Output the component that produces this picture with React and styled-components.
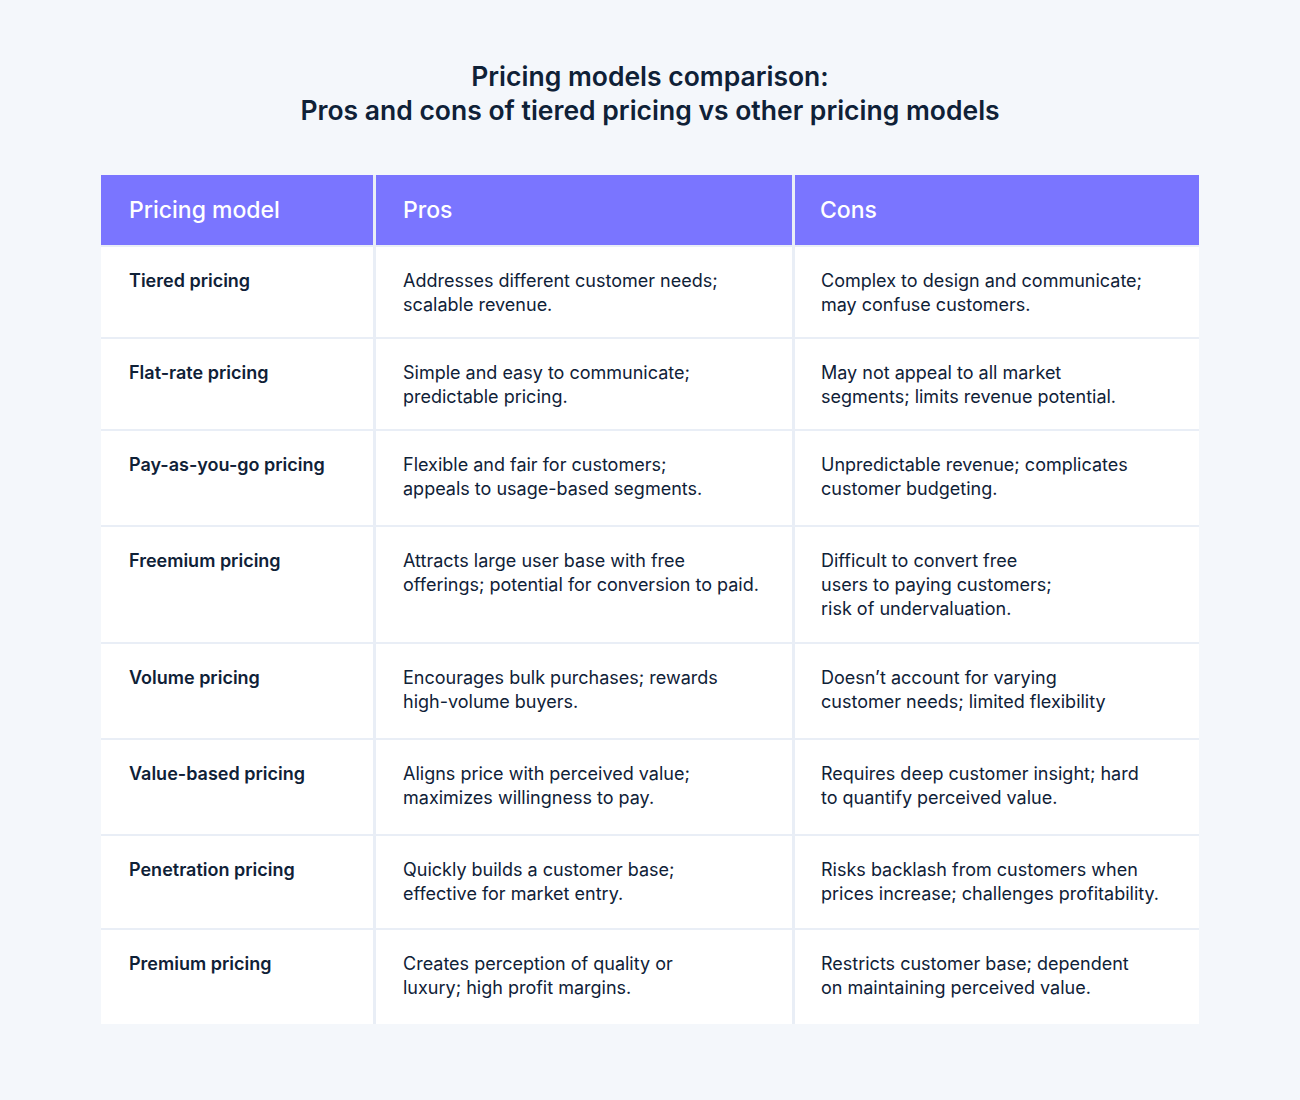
import styled, { createGlobalStyle } from "styled-components";

const GlobalStyle = createGlobalStyle`
    body {
        margin: 0;
        background: #f4f7fb;
        font-family: "Inter", "Noto Sans", sans-serif;
        color: #0f2137;
    }
`;

const rows = [
    {
        model: "Tiered pricing",
        pros: ["Addresses different customer needs;", "scalable revenue."],
        cons: ["Complex to design and communicate;", "may confuse customers."],
        h: 90,
    },
    {
        model: "Flat-rate pricing",
        pros: ["Simple and easy to communicate;", "predictable pricing."],
        cons: ["May not appeal to all market", "segments; limits revenue potential."],
        h: 90,
    },
    {
        model: "Pay-as-you-go pricing",
        pros: ["Flexible and fair for customers;", "appeals to usage-based segments."],
        cons: ["Unpredictable revenue; complicates", "customer budgeting."],
        h: 94,
    },
    {
        model: "Freemium pricing",
        pros: ["Attracts large user base with free", "offerings; potential for conversion to paid."],
        cons: ["Difficult to convert free", "users to paying customers;", "risk of undervaluation."],
        h: 115,
    },
    {
        model: "Volume pricing",
        pros: ["Encourages bulk purchases; rewards", "high-volume buyers."],
        cons: ["Doesn’t account for varying", "customer needs; limited flexibility"],
        h: 94,
    },
    {
        model: "Value-based pricing",
        pros: ["Aligns price with perceived value;", "maximizes willingness to pay."],
        cons: ["Requires deep customer insight; hard", "to quantify perceived value."],
        h: 94,
    },
    {
        model: "Penetration pricing",
        pros: ["Quickly builds a customer base;", "effective for market entry."],
        cons: ["Risks backlash from customers when", "prices increase; challenges profitability."],
        h: 92,
    },
    {
        model: "Premium pricing",
        pros: ["Creates perception of quality or", "luxury; high profit margins."],
        cons: ["Restricts customer base; dependent", "on maintaining perceived value."],
        h: 94,
    },
];

const Lines = ({ lines }) =>
    lines.map((l, i) => (
        <span key={i}>
            {l}
            {i < lines.length - 1 && <br />}
        </span>
    ));

const App = () => {
    return (
        <>
            <GlobalStyle />
            <Page>
                <Title>
                    Pricing models comparison:
                    <br />
                    Pros and cons of tiered pricing vs other pricing models
                </Title>
                <Table>
                    <HeadCell $pad={28}>Pricing model</HeadCell>
                    <HeadCell $pad={27}>Pros</HeadCell>
                    <HeadCell $pad={25}>Cons</HeadCell>
                    {rows.map((r) => (
                        <Row key={r.model} $h={r.h}>
                            <Cell $bold $pad={28}>
                                {r.model}
                            </Cell>
                            <Cell $pad={27}>
                                <Lines lines={r.pros} />
                            </Cell>
                            <Cell $pad={26}>
                                <Lines lines={r.cons} />
                            </Cell>
                        </Row>
                    ))}
                </Table>
            </Page>
        </>
    );
};

const Page = styled.div`
    width: 1300px;
    min-height: 1100px;
    box-sizing: border-box;
    padding: 59px 101px 0;
    display: flex;
    flex-direction: column;
    align-items: center;
`;

const Title = styled.h1`
    margin: 0 0 48px;
    font-size: 26.5px;
    line-height: 34px;
    font-weight: 600;
    letter-spacing: 0;
    text-align: center;
    color: #0f2137;
`;

const Table = styled.div`
    width: 1098px;
    display: grid;
    grid-template-columns: 272px 416px 404px;
    column-gap: 3px;
    row-gap: 2px;
    background: #e9eef6;
`;

const HeadCell = styled.div`
    height: 70px;
    display: flex;
    align-items: center;
    padding-left: ${(p) => p.$pad}px;
    background: #7a75ff;
    color: #ffffff;
    font-size: 23px;
    font-weight: 500;
`;

const Row = styled.div`
    display: contents;

    & > div {
        height: ${(p) => p.$h}px;
    }
`;

const Cell = styled.div`
    box-sizing: border-box;
    background: #ffffff;
    padding: 22px 16px 0 ${(p) => p.$pad}px;
    font-size: 18px;
    line-height: 24px;
    font-weight: ${(p) => (p.$bold ? 600 : 400)};
    color: #0f2137;
`;

export default App;
